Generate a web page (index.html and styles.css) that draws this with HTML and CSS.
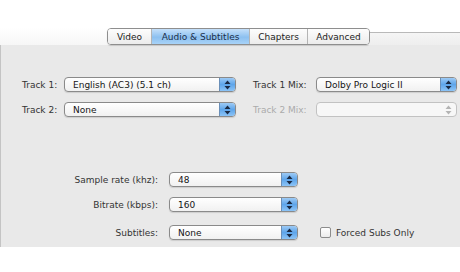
FILE: index.html
```html
<!DOCTYPE html>
<html lang="en">
<head>
    <title>Audio &amp; Subtitles</title>
    <meta charset="UTF-8">
    <meta name="viewport" content="width=device-width, initial-scale=1">
    <link rel="stylesheet" href="styles.css">
</head>
<body>
    <!-- Tab bar -->
    <div class="tabbar">
        <div class="tab-left"></div>
        <div class="tabs">
            <div class="tab first">Video</div>
            <div class="tab active">Audio &amp; Subtitles</div>
            <div class="tab">Chapters</div>
            <div class="tab last">Advanced</div>
        </div>
        <div class="tab-right"></div>
    </div>

    <div class="panel">
        <!-- Tracks -->
        <div class="tracks">
            <div class="row">
                <label class="lbl lbl-track">Track 1:</label>
                <div class="popup w-track"><span>English (AC3) (5.1 ch)</span><i class="arrows"><svg width="7" height="10" viewBox="0 0 7 10"><path d="M3.5 0.5 L6.5 4 L0.5 4 Z M3.5 9.5 L6.5 6 L0.5 6 Z" fill="#1a2a44"/></svg></i></div>
                <label class="lbl lbl-mix">Track 1 Mix:</label>
                <div class="popup w-mix"><span>Dolby Pro Logic II</span><i class="arrows"><svg width="7" height="10" viewBox="0 0 7 10"><path d="M3.5 0.5 L6.5 4 L0.5 4 Z M3.5 9.5 L6.5 6 L0.5 6 Z" fill="#1a2a44"/></svg></i></div>
            </div>
            <div class="row">
                <label class="lbl lbl-track">Track 2:</label>
                <div class="popup w-track"><span>None</span><i class="arrows"><svg width="7" height="10" viewBox="0 0 7 10"><path d="M3.5 0.5 L6.5 4 L0.5 4 Z M3.5 9.5 L6.5 6 L0.5 6 Z" fill="#1a2a44"/></svg></i></div>
                <label class="lbl lbl-mix disabled">Track 2 Mix:</label>
                <div class="popup w-mix off"><span></span><i class="arrows"><svg width="7" height="10" viewBox="0 0 7 10"><path d="M3.5 0.5 L6.5 4 L0.5 4 Z M3.5 9.5 L6.5 6 L0.5 6 Z" fill="#b4b4b4"/></svg></i></div>
            </div>
        </div>

        <!-- Settings -->
        <div class="settings">
            <div class="row">
                <label class="lbl lbl-set">Sample rate (khz):</label>
                <div class="popup w-set"><span>48</span><i class="arrows"><svg width="7" height="10" viewBox="0 0 7 10"><path d="M3.5 0.5 L6.5 4 L0.5 4 Z M3.5 9.5 L6.5 6 L0.5 6 Z" fill="#1a2a44"/></svg></i></div>
            </div>
            <div class="row">
                <label class="lbl lbl-set">Bitrate (kbps):</label>
                <div class="popup w-set"><span>160</span><i class="arrows"><svg width="7" height="10" viewBox="0 0 7 10"><path d="M3.5 0.5 L6.5 4 L0.5 4 Z M3.5 9.5 L6.5 6 L0.5 6 Z" fill="#1a2a44"/></svg></i></div>
            </div>
            <div class="row last-row">
                <label class="lbl lbl-set">Subtitles:</label>
                <div class="popup w-set"><span>None</span><i class="arrows"><svg width="7" height="10" viewBox="0 0 7 10"><path d="M3.5 0.5 L6.5 4 L0.5 4 Z M3.5 9.5 L6.5 6 L0.5 6 Z" fill="#1a2a44"/></svg></i></div>
                <div class="check"><span class="box"></span>Forced Subs Only</div>
            </div>
        </div>
    </div>
</body>
</html>
```

FILE: styles.css
```css
body { margin: 0; background: #fff; font-family: "DejaVu Sans", Arial, sans-serif; font-size: 9px; color: #2a2a2a; }

.tabbar { display: flex; margin-top: 28px; height: 17px; }
.tab-left { width: 107px; background: linear-gradient(#fff, #f6f6f6); }
.tabs { display: flex; border: 1px solid #8e8e8e; border-radius: 4px; overflow: hidden; box-shadow: 0 1px 1px rgba(0,0,0,0.15); }
.tab { display: flex; align-items: center; justify-content: center; padding: 0 10px; background: linear-gradient(#fdfdfd, #ececec); border-left: 1px solid #b4b4b4; color: #222; }
.tab.first { border-left: none; width: 23px; }
.tab.active { background: linear-gradient(#c5e0fa, #8cc0f0 55%, #a8d3f8); color: #1b2e4a; padding: 0 9px; width: 79px; }
.tab:nth-child(3) { width: 37px; }
.tab.last { width: 41px; }
.tab-right { flex: 1; margin-top: 4px; border-top: 1px solid #b9b9b9; background: linear-gradient(#f5f5f5, #eeeeee); }

.panel { background: #e9e9e9; height: 202px; padding-top: 32px; box-sizing: border-box; border-left: 1px solid #c4c4c4; }

.row { display: flex; align-items: center; height: 15px; }
.tracks .row + .row { margin-top: 10px; }

.lbl { color: #333; }
.lbl.disabled { color: #ababab; }
.lbl-track { width: 42px; padding-left: 21px; }
.lbl-mix { width: 63px; padding-left: 17px; }
.lbl-set { width: 168px; text-align: right; padding-right: 11px; box-sizing: border-box; }

.popup { display: flex; align-items: center; height: 15px; box-sizing: border-box; border: 1px solid #8a8a8a; border-radius: 4px; background: linear-gradient(#ffffff, #f1f1f1); box-shadow: 0 1px 1px rgba(0,0,0,0.12); overflow: hidden; color: #151515; }
.popup span { flex: 1; padding-left: 8px; white-space: nowrap; }
.popup .arrows { display: flex; align-items: center; justify-content: center; width: 15px; height: 100%; background: linear-gradient(#9dcaf5, #5ea5ea 50%, #8cc4f7); border-left: 1px solid #6a8fb8; }
.popup.off { border-color: #c2c2c2; background: #f7f7f7; box-shadow: none; }
.popup.off .arrows { background: none; border-left: none; }

.w-track { width: 172px; }
.w-mix { width: 141px; }
.w-set { width: 129px; }

.settings { margin-top: 55px; }
.settings .row + .row { margin-top: 10px; }
.settings .last-row { margin-top: 13px !important; }

.check { display: flex; align-items: center; margin-left: 22px; color: #333; }
.check .box { width: 9px; height: 9px; border: 1px solid #8c8c8c; border-radius: 2px; background: linear-gradient(#fff, #ececec); margin-right: 5px; }
```
